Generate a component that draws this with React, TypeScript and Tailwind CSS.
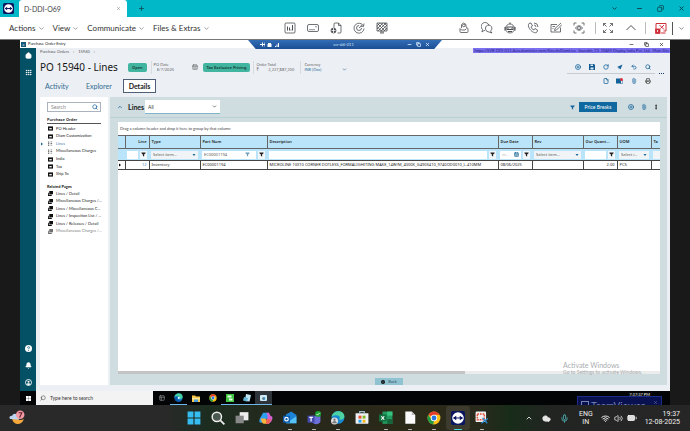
import type { ReactNode } from "react";
import {
  Battery, Bell, CalendarDays, ChevronDown, ChevronUp, CirclePlus,
  Cloud, Copy, EllipsisVertical, File, Grip, House, Mic, Minus, PanelsTopLeft,
  Paperclip, Plus, Printer, RotateCw, Search, Undo2, Volume2, Wifi, X,
} from "lucide-react";

const ui = "font-['Lato','Noto_Sans',sans-serif]";

function Funnel({ className = "" }: { className?: string }) {
  return (
    <svg viewBox="0 0 12 12" className={`h-[5px] w-[5px] shrink-0 ${className}`} fill="currentColor" aria-hidden="true">
      <path d="M1 1h10v2L7.500 6v5L4.500 9.500V6L1 3z" />
    </svg>
  );
}

function Caret({ className = "" }: { className?: string }) {
  return (
    <svg viewBox="0 0 6 4" className={`h-[2px] w-[4px] shrink-0 ${className}`} fill="currentColor" aria-hidden="true">
      <path d="M0 0h6L3 4z" />
    </svg>
  );
}

function TeamViewerMark({ className = "" }: { className?: string }) {
  return (
    <svg viewBox="0 0 24 24" className={className} aria-hidden="true">
      <rect width="24" height="24" rx="4" fill="#0b1560" />
      <circle cx="12" cy="12" r="9.500" fill="#fff" />
      <path d="M3.500 12 9 8v2.700h6V8l5.500 4-5.500 4v-2.700H9V16z" fill="#0b1560" />
    </svg>
  );
}

/* ---------- session window: title bar and toolbar ---------- */

function SessionTitleBar() {
  return (
    <header className="flex h-[17px] items-center bg-[#00b8c8] text-[#0d3f49]">
      <TeamViewerMark className="ml-[3px] h-[11px] w-[11px]" />
      <div className="ml-[5px] flex h-[17px] w-[108px] items-center justify-between rounded-t-[3px] bg-white pr-[6px] pl-[5px]">
        <span className="text-[7px] leading-[10px] text-[#444]">D-DDI-O69</span>
        <button aria-label="Close tab"><X size={5} strokeWidth={2} className="text-gray-500" /></button>
      </div>
      <button aria-label="New session" className="ml-[11px]"><Plus size={7} strokeWidth={2.5} /></button>
      <div className="ml-auto flex items-center gap-[14px] pr-[5px]">
        <button aria-label="More" className="mr-1"><ChevronDown size={7} strokeWidth={3} /></button>
        <button aria-label="Minimize"><Minus size={7} strokeWidth={3} /></button>
        <button aria-label="Restore"><Copy size={7} strokeWidth={2.5} className="rotate-90" /></button>
        <button aria-label="Close"><X size={7} strokeWidth={3} /></button>
      </div>
    </header>
  );
}

function Tool({ label, children, red = false }: { label: string; children: ReactNode; red?: boolean }) {
  return (
    <button aria-label={label} className="flex w-[23px] shrink-0 justify-center">
      <svg viewBox="0 0 24 24" className={`h-3 w-3 ${red ? "text-[#cf2f38]" : "text-[#4c4f54]"}`} fill="none" stroke="currentColor" strokeWidth="1.600">
        {children}
      </svg>
    </button>
  );
}

function SessionToolbar() {
  const menus = ["Actions", "View", "Communicate", "Files & Extras"];
  return (
    <div className="flex h-[23px] items-center border-b border-[#777] bg-white">
      <nav className="flex w-[278px] shrink-0 items-center gap-2 pl-[9px]">
        {menus.map((m) => (
          <button key={m} className="flex items-center gap-[2px] text-[8px] leading-[10px] whitespace-nowrap text-[#333]">
            {m}
            <ChevronDown size={7} strokeWidth={1.5} />
          </button>
        ))}
      </nav>
      <div className="flex">
        <Tool label="Dashboard">
          <rect x="2" y="2" width="20" height="20" rx="2" />
          <path d="M7 17V9M11 17v-6M17 17V6M14 17v-2" strokeWidth="2" />
        </Tool>
        <Tool label="Send key">
          <rect x="1" y="5" width="22" height="14" rx="3" />
          <path d="M5 15h2M9 15h2M13 15h2M17 9h2" strokeWidth="2.500" />
        </Tool>
        <Tool label="Remote file">
          <path d="M8 11V4a2 2 0 0 1 2-2h7l5 5v13a2 2 0 0 1-2 2h-5M17 2v5h5" />
          <circle cx="7" cy="17" r="5" fill="#4c4f54" />
          <path d="M3 17h8M7 12v10" stroke="#fff" />
        </Tool>
        <Tool label="Reboot">
          <path d="M21 8A10 10 0 1 0 22 13M22 3l-1 6-6-1M17 12a5 5 0 1 1-5-5M12 12l6-5" />
        </Tool>
        <Tool label="Black screen">
          <path d="M2 2h20v16H2zM8 22h8M10 18v4M14 18v4M2 8l6-6M2 14 14 2M4 18 20 2M10 18 22 6M16 18l6-6M16 2l6 6M9 2l13 13M3 3l15 15M2 9l9 9" />
        </Tool>
      </div>
      <div className="ml-auto flex items-center">
        <Tool label="Invite">
          <path d="M7 12V5l4-3 5 3v5l4 3v6a2 2 0 0 1-2 2H6a2 2 0 0 1-2-2v-6l3 3h7l3-3" />
          <circle cx="11.500" cy="7" r="2.500" />
        </Tool>
        <Tool label="Chat">
          <path d="M8 17H6l-4 3 1-5a8 8 0 1 1 13-8M9 14a6.500 6.500 0 1 1 10 4l3 4-6-2a7 7 0 0 1-7-6z" />
        </Tool>
        <Tool label="Assistant">
          <circle cx="12" cy="13" r="9" />
          <path d="M2 10v7M22 10v7M12 1v3M6 10h12v5H6zM8 19h8" strokeWidth="2.200" />
          <path d="M9 12v1M15 12v1" strokeWidth="2.500" />
        </Tool>
        <Tool label="Call">
          <path d="M4 3 8 2l3 6-3 2c1 3 3 5 6 6l2-3 5 3-1 4c-2 3-8 1-12-3S1 7 4 3zM14 2a8 8 0 0 1 8 8M14 6a4 4 0 0 1 4 4" />
        </Tool>
        <Tool label="Whiteboard">
          <path d="M14 5H2v15h19v-9M22 2 10 13l-1 4 4-1L24 5M5 9h5M5 13h2" />
        </Tool>
        <Tool label="Screenshot">
          <path d="M2 7V2h5M17 2h5v5M22 17v5h-5M7 22H2v-5M5 12c4-6 10-6 14 0-4 6-10 6-14 0z" />
          <circle cx="12" cy="12" r="3" />
        </Tool>
        <span className="ml-[5px] h-3 w-px bg-[#bbb]" />
        <Tool label="Full screen">
          <path d="M3 8V3h5M16 3h5v5M21 16v5h-5M8 21H3v-5M3 3l6 6M21 3l-6 6M21 21l-6-6M3 21l6-6" />
        </Tool>
        <Tool label="Collapse toolbar"><path d="m3 16 9-9 9 9" strokeWidth="2" /></Tool>
        <span className="ml-[3px] h-3 w-px bg-[#bbb]" />
        <span className="w-[3px]" />
        <Tool label="End session" red>
          <path d="M10 18H2V3h20v15h-5M9 6l9 9M18 6l-7 7M12 22h9" strokeWidth="2" />
          <path d="M1 14h9v9H1z" fill="currentColor" />
          <path d="M5 16v4" stroke="#fff" />
        </Tool>
        <span className="h-[13px] w-px bg-[#555]" />
        <button aria-label="End session options" className="px-[5px]"><ChevronDown size={7} strokeWidth={1.5} /></button>
      </div>
    </div>
  );
}

/* ---------- remote desktop ---------- */

function ConnectionBar() {
  return (
    <div className="absolute top-0 left-[228px] flex h-[9px] w-[194px] items-center justify-between bg-linear-to-b from-[#326db5] to-[#1b4e95] px-3 text-[4px] leading-[6px] text-[#d4e4f8] [clip-path:polygon(0_0,100%_0,96%_100%,4%_100%)]">
      <svg viewBox="0 0 40 10" className="h-[5px] w-5" fill="#fff" aria-hidden="true">
        <path d="M0 4h4V1h2v3h3V1h1v8H9V6H6v3H4V6H0zM16 4V2h6v2h1v6h-8V4zM30 8h2v2h-2zM33 5h2v5h-2zM36 2h2v8h-2z" />
      </svg>
      <span>svr-ddi-011</span>
      <span className="flex gap-1">
        <Minus size={5} strokeWidth={4} />
        <Copy size={5} strokeWidth={4} />
        <X size={5} strokeWidth={4} />
      </span>
    </div>
  );
}

function AppTitleBar() {
  return (
    <div className="flex h-2 items-center bg-white text-[4px] leading-[6px] text-[#222]">
      <span className="ml-px flex h-[5px] w-[5px] items-center justify-center bg-[#12597a] text-[4px] leading-[5px] text-white">e</span>
      <span className="ml-[2px]">Purchase Order Entry</span>
      <div className="mr-[6px] ml-auto flex gap-[10px]">
        <button aria-label="Minimize window"><Minus size={5} strokeWidth={3} /></button>
        <button aria-label="Restore window"><Copy size={5} strokeWidth={3} /></button>
        <button aria-label="Close window"><X size={5} strokeWidth={3} /></button>
      </div>
    </div>
  );
}

function Rail() {
  return (
    <nav className="flex w-4 shrink-0 flex-col items-center bg-[#045064] pt-1 pb-[5px] text-white">
      <button aria-label="Home"><House size={7} fill="white" strokeWidth={2} /></button>
      <button aria-label="Applications" className="mt-[10px]"><Grip size={7} strokeWidth={3} /></button>
      <div className="mt-auto flex flex-col items-center gap-[10px]">
        <button aria-label="Help">
          <svg viewBox="0 0 14 14" className="h-[7px] w-[7px]"><circle cx="7" cy="7" r="7" fill="#fff" /><path d="M5 5.500c0-3 4.500-2.500 4 0C8.800 6.800 7 6.800 7 8.500M7 10v1.600" stroke="#045064" strokeWidth="1.600" fill="none" /></svg>
        </button>
        <button aria-label="Notifications"><Bell size={7} fill="white" /></button>
        <button aria-label="Account">
          <svg viewBox="0 0 14 14" className="h-[7px] w-[7px]"><circle cx="7" cy="7" r="6" fill="none" stroke="#fff" strokeWidth="1.800" /><circle cx="7" cy="5.500" r="2" fill="#fff" /><path d="M3 10.500c1-3 7-3 8 0l-4 2z" fill="#fff" /></svg>
        </button>
      </div>
    </nav>
  );
}

function Pill({ children }: { children: ReactNode }) {
  return (
    <button className="h-[9px] rounded-[2px] bg-[#42b5a0] px-1 font-['Noto_Sans',sans-serif] text-[4px] leading-[9px] font-semibold whitespace-nowrap text-[#11332f]">
      {children}
    </button>
  );
}

function IconButton({ label, children }: { label: string; children: ReactNode }) {
  return <button aria-label={label} className="flex h-[7px] w-[7px] items-center justify-center">{children}</button>;
}

function PageHeader() {
  const divider = "h-[13px] w-px bg-[#d8dce1]";
  return (
    <div className="flex h-[49px] items-start justify-between">
      <div>
        <div className="flex h-[7px] items-center gap-1 pl-[3px] text-[4px] leading-[6px] text-[#555]">
          <a href="#orders">Purchase Orders</a><span>›</span>
          <a href="#15940">15940</a><span>›</span>
        </div>
        <div className="flex h-6 items-center pl-[3px]">
          <h1 className="w-[88px] font-['Noto_Sans',sans-serif] text-[10px] leading-[14px] whitespace-nowrap text-[#151515]">PO 15940 - Lines</h1>
          <Pill>Open</Pill>
          <span className={`ml-1 ${divider}`} />
          <div className="ml-px flex w-[50px] items-center justify-between pr-[5px] pl-px">
            <label className="flex flex-col text-[4px] leading-[5px] text-[#666]">
              PO Date
              <input defaultValue="8/7/2025" className="block w-9 bg-transparent pl-[3px] outline-none" />
            </label>
            <CalendarDays size={6} className="text-[#555]" />
          </div>
          <Pill>Tax Exclusive Pricing</Pill>
          <span className={`ml-[3px] ${divider}`} />
          <div className="w-[46px] pl-[2px] text-[4px] leading-[5px] text-[#666]">
            Order Total
            <div className="flex w-[38px] justify-between font-['Noto_Sans',sans-serif]"><span>₹</span><span>2,227,887,200</span></div>
          </div>
          <span className={divider} />
          <label className="flex w-[46px] flex-col pl-[3px] text-[4px] leading-[5px] text-[#666]">
            Currency
            <span className="flex items-center justify-between">
              <select className="w-8 appearance-none bg-transparent text-[#2c6d9c]"><option>INR (Doc)</option></select>
              <ChevronDown size={5} strokeWidth={3} className="text-[#2c6d9c]" />
            </span>
          </label>
        </div>
        <nav className="flex h-[14px] items-center text-[7px] leading-[9px] text-[#306b91]">
          <a href="#activity" className="w-10 pl-[8px]">Activity</a>
          <a href="#explorer" className="w-[46px] pl-[9px]">Explorer</a>
          <a href="#details" className="flex h-[14px] w-[33px] items-center justify-center border border-[#4f6076] bg-white font-bold text-[#1a1a1a]">Details</a>
        </nav>
      </div>
      <div className="flex flex-col items-end">
        <p className="h-[5px] bg-[#7a70f0] px-px text-[4px] leading-[5px] whitespace-nowrap text-[#241c7c]">
          https://SVR-DDI-011.Asia.diaminter.com/KineticDiamLive &nbsp;Saurabh_CS &nbsp;DIAM Display India Pvt. Ltd. &nbsp;Main Site
        </p>
        <div className="mt-[10px] mr-[6px] flex items-center gap-1 text-[#14639a]">
          <div>
            <div className="flex justify-end gap-[7px] border-b border-[#c6ccd2] pr-1 pb-[3px] pl-[7px]">
              <IconButton label="New"><CirclePlus size={6} strokeWidth={3} /></IconButton>
              <IconButton label="Save">
                <svg viewBox="0 0 12 12" className="h-[6px] w-[6px]"><path d="M0 0h10l2 2v10H0z" fill="#0f5a90" /><path d="M3 1h5v3H3zM3 7h6v4H3z" fill="#dfe9f1" /></svg>
              </IconButton>
              <IconButton label="Refresh"><RotateCw size={6} strokeWidth={3} /></IconButton>
              <IconButton label="Submit">
                <svg viewBox="0 0 12 12" className="h-[6px] w-[6px]"><path d="M11 1 7 11l-2-3-1 3-1-4-3-1z" fill="#14639a" /></svg>
              </IconButton>
              <IconButton label="Undo"><Undo2 size={6} strokeWidth={3} /></IconButton>
              <IconButton label="Search"><Search size={6} strokeWidth={3} /></IconButton>
            </div>
            <div className="flex justify-end gap-[7px] pt-[3px] pr-1">
              <IconButton label="Notes"><File size={6} strokeWidth={3} /></IconButton>
              <IconButton label="Messages">
                <svg viewBox="0 0 14 12" className="h-[6px] w-[7px]"><path d="M0 1h10v10H0z" fill="#14639a" /><path d="M9 4h4v7H9z" fill="none" stroke="#14639a" /><circle cx="11" cy="3" r="3" fill="#e2343f" /></svg>
              </IconButton>
              <IconButton label="Attachments"><Paperclip size={6} strokeWidth={2} className="-rotate-45" /></IconButton>
              <IconButton label="Print"><Printer size={6} strokeWidth={3} className="text-[#555]" /></IconButton>
            </div>
          </div>
          <button aria-label="More actions" className="flex w-[5px] justify-between text-[#0c3d6b]">
            <span className="h-px w-px bg-current" /><span className="h-px w-px bg-current" /><span className="h-px w-px bg-current" />
          </button>
        </div>
      </div>
    </div>
  );
}

function PageIcon({ kind }: { kind: "card" | "list" | "stack" }) {
  return (
    <svg viewBox="0 0 12 12" className="h-[5px] w-[5px] shrink-0" aria-hidden="true">
      {kind === "card" && <><path d="M0 1h12v10H0z" fill="#111" /><path d="M3 5h6v3H3z" fill="#fff" /></>}
      {kind === "list" && <path d="M0 1h3v3H0zM0 5h3v3H0zM0 9h3v3H0zM6 1h4v2H6zM6 5h4v2H6zM6 9h4v2H6z" fill="#777" />}
      {kind === "stack" && <path d="M3 0h9v8H3zM0 4h2v5h7v3H0z" fill="#111" />}
    </svg>
  );
}

const pages: { name: string; kind: "card" | "list" }[] = [
  { name: "PO Header", kind: "card" },
  { name: "Diam Customization", kind: "card" },
  { name: "Lines", kind: "list" },
  { name: "Miscellaneous Charges", kind: "list" },
  { name: "India", kind: "card" },
  { name: "Tax", kind: "card" },
  { name: "Ship To", kind: "card" },
];

const related = [
  "Lines / Detail", "Miscellaneous Charges /...", "Lines / Miscellaneous C...",
  "Lines / Inspection List / ...", "Lines / Releases / Detail", "Miscellaneous Charges /...",
];

function SidePanel() {
  return (
    <aside className="w-[68px] shrink-0 bg-white px-[7px] pt-[5px] text-[4px] leading-[6px] text-[#222]">
      <div className="flex h-[10px] items-center border border-[#aab3bd] pr-[2px] pl-[3px]">
        <input type="search" aria-label="Search pages" placeholder="Search" className="w-full min-w-0 bg-transparent text-[5px] leading-[7px] outline-none placeholder:text-[#888]" />
        <Search size={6} strokeWidth={3} className="shrink-0 text-[#2a6fa5]" />
      </div>
      <h2 className="mt-[5px] border-b border-[#555] font-['Noto_Sans',sans-serif] font-semibold text-[#111]">Purchase Order</h2>
      <ul className="mt-px grid h-[53px] auto-rows-fr items-center">
        {pages.map((p) => (
          <li key={p.name}>
            <a href="#page" className={`relative flex items-center gap-[3px] pl-px whitespace-nowrap ${p.name === "Lines" ? "text-[#3b7dab]" : ""}`}>
              {p.name === "Lines" && <Caret className="absolute left-[-7px] -rotate-90 text-[#1463a0]" />}
              <PageIcon kind={p.kind} />
              {p.name}
            </a>
          </li>
        ))}
      </ul>
      <h2 className="mt-[6px] font-bold text-[#111]">Related Pages</h2>
      <ul className="grid h-[45px] auto-rows-fr items-center">
        {related.map((r, i) => (
          <li key={i}>
            <a href="#related" className={`flex items-center gap-[3px] pl-px whitespace-nowrap ${i === 5 ? "opacity-60" : ""}`}>
              <PageIcon kind="stack" />
              {r}
            </a>
          </li>
        ))}
      </ul>
    </aside>
  );
}

function FilterButton({ label }: { label: string }) {
  return <button aria-label={`Filter ${label}`} className="flex h-2 w-[7px] shrink-0 items-center justify-center bg-[#f4f7f9] text-[#222]"><Funnel /></button>;
}

function TextFilter({ label, value = "", clear = false }: { label: string; value?: string; clear?: boolean }) {
  return (
    <div className="flex items-center gap-[2px]">
      <div className="flex h-2 min-w-0 flex-1 items-center bg-white px-[2px] text-[#555]">
        <input aria-label={`${label} filter`} defaultValue={value} className="w-full min-w-0 bg-transparent outline-none" />
        {clear && <Funnel className="mr-1 text-[#6f9fbb]" />}
      </div>
      <FilterButton label={label} />
    </div>
  );
}

function SelectFilter({ label, text }: { label: string; text: string }) {
  return (
    <div className="flex h-2 items-center bg-[#f1f4f6] px-[2px] text-[#555]">
      <select aria-label={`${label} filter`} className="w-full min-w-0 appearance-none bg-transparent"><option>{text}</option></select>
      <Caret className="text-[#1c6797]" />
    </div>
  );
}

function LinesGrid() {
  const th = "border-r border-[#666] px-[2px] text-left font-semibold overflow-hidden text-ellipsis whitespace-nowrap";
  const td = "border-r border-[#444] px-[2px] whitespace-nowrap overflow-hidden";
  const f = "px-[2px]";
  return (
    <div className="flex flex-1 flex-col overflow-hidden bg-white text-[4px] leading-[6px] text-[#222]">
      <p className="h-[13px] px-[2px] pt-1 text-[#444]">Drag a column header and drop it here to group by that column</p>
      <table className="w-full table-fixed border-collapse font-['Noto_Sans',sans-serif]">
        <colgroup>
          <col className="w-[7px]" /><col className="w-6" /><col className="w-[51px]" /><col className="w-[67px]" /><col />
          <col className="w-[34px]" /><col className="w-[51px]" /><col className="w-[34px]" /><col className="w-[34px]" /><col className="w-[9px]" />
        </colgroup>
        <thead>
          <tr className="h-[13px] border-t border-b border-[#666] bg-[#bae4fa]">
            <th className={th} /><th className={`${th} text-right!`}>Line</th><th className={th}>Type</th><th className={th}>Part Num</th>
            <th className={th}>Description</th><th className={th}>Due Date</th><th className={th}>Rev</th>
            <th className={th}>Our Quant...</th><th className={th}>UOM</th><th className="overflow-hidden px-[2px] text-left font-semibold">Ta</th>
          </tr>
          <tr className="h-3 border-b border-[#444] bg-[#bae4fa]">
            <td />
            <td className={f}><TextFilter label="Line" /></td>
            <td className={f}><SelectFilter label="Type" text="Select item..." /></td>
            <td className={f}><TextFilter label="Part Num" value="EC00001194" clear /></td>
            <td className={f}><TextFilter label="Description" /></td>
            <td className={f}>
              <div className="flex items-center gap-[2px]">
                <div className="flex h-2 min-w-0 flex-1 items-center bg-white px-[2px] text-[#666]">
                  <input aria-label="Due date filter" placeholder="m..." className="w-full min-w-0 bg-transparent outline-none" />
                  <CalendarDays size={5} strokeWidth={3} className="shrink-0 text-[#1c6797]" />
                </div>
                <FilterButton label="Due Date" />
              </div>
            </td>
            <td className={f}><SelectFilter label="Rev" text="Select item..." /></td>
            <td className={f}><TextFilter label="Our Quantity" /></td>
            <td className={f}><SelectFilter label="UOM" text="Select i..." /></td>
            <td className="pl-[2px]"><div className="h-2 bg-[#f1f4f6]" /></td>
          </tr>
        </thead>
        <tbody>
          <tr className="h-[9px] border-b border-[#444]">
            <td className="border-r border-[#444]"><Caret className="-rotate-90 text-black" /></td>
            <td className={`${td} text-right text-[#3b7dab]`}>12</td>
            <td className={td}>Inventory</td>
            <td className={td}>EC00001194</td>
            <td className={td}>MICROLINE 10X10 CORNER DOTLESS_FORMALIGHITING MAKE_14W/M_4000K_G4903410_9740OD0010_L-410MM</td>
            <td className={td}>08/06/2025</td>
            <td className={td} />
            <td className={`${td} text-right`}>2.00</td>
            <td className={td}>PCS</td>
            <td />
          </tr>
        </tbody>
      </table>
      <div className="mt-auto h-[3px] bg-[#ececec]"><div className="h-full w-[64%] bg-[#c4c4c4]" /></div>
    </div>
  );
}

function LinesPanel() {
  return (
    <main className="flex min-w-0 flex-1 flex-col bg-[#cfdde0] pr-[7px] pl-2">
      <div className="-mr-[7px] -ml-2 flex h-[21px] items-center border-b border-[#b8cfd6] pr-[8px] pl-[7px]">
        <button aria-label="Collapse lines"><ChevronUp size={6} strokeWidth={3} className="text-[#17609a]" /></button>
        <h2 className="ml-[5px] w-[17px] text-[7px] leading-[9px] font-bold text-[#1a1a1a]">Lines</h2>
        <div className="flex h-[14px] w-[75px] items-center border-b border-[#7fb6cc] bg-white px-[3px] text-[5px] leading-[8px] text-[#333]">
          <select aria-label="Lines view" className="w-full min-w-0 appearance-none bg-transparent"><option>All</option></select>
          <ChevronDown size={5} strokeWidth={3} className="shrink-0" />
        </div>
        <div className="ml-auto flex items-center text-[#14639a]">
          <button aria-label="Filter lines"><Funnel /></button>
          <button className="ml-1 h-[10px] w-[38px] bg-[#0f69a0] text-[5px] leading-[10px] whitespace-nowrap text-white">Price Breaks</button>
          <button aria-label="Add line" className="ml-[11px]"><CirclePlus size={6} strokeWidth={3} /></button>
          <button aria-label="Attach" className="ml-[7px]"><Paperclip size={6} strokeWidth={2} className="-rotate-45" /></button>
          <button aria-label="More line actions" className="ml-[6px]"><EllipsisVertical size={6} strokeWidth={4} className="text-[#333]" /></button>
        </div>
      </div>
      <div className="h-1" />
      <LinesGrid />
      <div className="flex h-[11px] items-end justify-center">
        <button className="flex h-[7px] w-7 items-center justify-center gap-[3px] bg-[#8fc3d1] text-[4px] leading-[7px] text-[#35505a]">
          <svg viewBox="0 0 10 10" className="h-[4px] w-[4px]" aria-hidden="true"><circle cx="5" cy="5" r="5" fill="#111" /><circle cx="5" cy="5" r="1.500" fill="#8fc3d1" /></svg>
          Back
        </button>
      </div>
    </main>
  );
}

function EdgeLogo({ className = "h-[9px] w-[9px]" }: { className?: string }) {
  return (
    <svg viewBox="0 0 24 24" className={className} aria-hidden="true">
      <circle cx="12" cy="12" r="11" fill="#1686d2" />
      <path d="M1 11C3-2 22-3 23 10c0 4-3 6-7 6-2 0-2-1-1-3 1-4-6-7-14-2z" fill="#45cfa0" />
      <path d="M9 11c-3 5 3 10 11 9-6 7-18 3-18-6 0-5 5-6 7-3z" fill="#0b56ab" />
      <path d="M12 10c3 0 4 2 3 4-1 3-4 2-5-1z" fill="#fff" />
    </svg>
  );
}

function ChromeLogo({ className = "h-2 w-2" }: { className?: string }) {
  return (
    <svg viewBox="0 0 24 24" className={className} aria-hidden="true">
      <circle cx="12" cy="12" r="11" fill="#fbc116" />
      <path d="M12 12 2.500 6.500A11 11 0 0 1 21.500 6.500H12z" fill="#e33b2e" />
      <path d="M2.500 6.500 7.500 15 12 17l-1.500 6A11 11 0 0 1 2.500 6.500z" fill="#229b48" />
      <circle cx="12" cy="12" r="5.500" fill="#fff" />
      <circle cx="12" cy="12" r="4.200" fill="#2b74e4" />
    </svg>
  );
}

function WindowsLogo({ className }: { className: string }) {
  return <svg viewBox="0 0 20 20" className={className} fill="currentColor" aria-hidden="true"><path d="M0 0h9.500v9.500H0zM10.500 0H20v9.500h-9.500zM0 10.500h9.500V20H0zM10.500 10.500H20V20h-9.500z" /></svg>;
}

function RemoteTaskbar() {
  const item = "flex h-full w-[17px] items-center justify-center";
  return (
    <footer className="flex h-[14px] items-center overflow-hidden bg-[#030405] text-white">
      <button aria-label="Remote start" className="flex w-4 justify-center"><WindowsLogo className="h-[5px] w-[5px]" /></button>
      <label className="flex h-[14px] w-[117px] items-center gap-1 bg-[#f3f3f3] pl-1 text-[#333]">
        <Search size={6} strokeWidth={2} className="-scale-x-100" />
        <input aria-label="Remote search" placeholder="Type here to search" className="w-24 bg-transparent text-[5px] leading-[7px] outline-none placeholder:text-[#333]" />
      </label>
      <button aria-label="Task view" className={item}><PanelsTopLeft size={6} className="text-[#bbb]" /></button>
      <button aria-label="Edge" className={`${item} border-b border-[#6fb7e8]`}><EdgeLogo /></button>
      <button aria-label="Files" className={item}>
        <svg viewBox="0 0 16 14" className="h-[7px] w-2"><path d="M0 1h6l2 2h8v11H0z" fill="#f8c94a" /><path d="M0 6h16v3H0z" fill="#fbe49a" /><path d="M4 9h8v5H4z" fill="#4aa0dc" /></svg>
      </button>
      <button aria-label="Chrome" className={item}><ChromeLogo /></button>
      <button aria-label="Sheets" className={`${item} border-b border-[#6fb7e8]`}>
        <svg viewBox="0 0 16 16" className="h-2 w-2"><path d="M0 0h16v16H0z" fill="#3fc43f" /><path d="M3 3h8v4H3zM6 9h7v4H6z" fill="#e7ffe7" /></svg>
      </button>
      <button aria-label="Notepad" className={`${item} border-b border-[#6fb7e8]`}>
        <svg viewBox="0 0 16 16" className="h-2 w-2"><path d="m6 0 10 2-3 13-9-1z" fill="#bfe4f2" /><path d="m2 6 8 2-2 7-8-2z" fill="#63b8d8" /></svg>
      </button>
      <button aria-label="Epicor" className={`${item} border-b border-[#6fb7e8] bg-[#2d3338]`}>
        <span className="flex h-[6px] w-[7px] items-center justify-center rounded-[1px] bg-[#cfeaf6] text-[6px] leading-[6px] font-bold text-[#0b587c]">e</span>
      </button>
      <span className="mr-5 mb-[7px] ml-auto text-[4px] leading-[5px]">7:37:37 PM</span>
    </footer>
  );
}

function RemoteDesktop() {
  return (
    <div className="flex flex-1 overflow-hidden bg-[#191919] px-5">
      <div className="relative flex min-w-0 flex-1 flex-col overflow-hidden">
        <AppTitleBar />
        <ConnectionBar />
        <div className="flex flex-1">
          <Rail />
          <div className="flex min-w-0 flex-1 flex-col bg-[#eceff4] pl-px">
            <PageHeader />
            <div className="flex flex-1 gap-[2px] pr-[3px] pl-[3px]">
              <SidePanel />
              <LinesPanel />
            </div>
            <div className="h-[6px]" />
          </div>
        </div>
        <RemoteTaskbar />
        <div className="absolute right-7 bottom-[29px] text-[#a9adaf]">
          <p className="text-[7px] leading-[8px]">Activate Windows</p>
          <p className="text-[5px] leading-[7px]">Go to Settings to activate Windows.</p>
        </div>
        <div className="absolute right-2 bottom-[-5px] flex h-[14px] w-[85px] items-start gap-[2px] border border-[#1c2c86] bg-[#0a1150] px-[3px] pt-[2px] text-[#7785b0]">
          <span className="mt-[2px] h-2 w-2 border border-[#7785b0]" />
          <span className="text-[10px] leading-[12px]">TeamViewer</span>
          <X size={5} className="mt-px ml-auto" />
        </div>
      </div>
    </div>
  );
}

/* ---------- local taskbar ---------- */

function Task({ label, running = false, active = false, children }: { label: string; running?: boolean; active?: boolean; children: ReactNode }) {
  return (
    <button aria-label={label} className={`relative flex h-6 w-6 shrink-0 items-center justify-center rounded-[3px] ${active ? "bg-[#3d3b2d]" : ""}`}>
      <svg viewBox="0 0 24 24" className="h-[14px] w-[14px]">{children}</svg>
      {running && <span className={`absolute bottom-0 h-px rounded-full ${active ? "w-2 bg-[#48d8e6]" : "w-1 bg-[#bbb]"}`} />}
    </button>
  );
}

function LocalTaskbar() {
  return (
    <footer className="flex h-[26px] items-center bg-[linear-gradient(90deg,#292929_0%,#292929_24%,#1c2d20_30%,#26281c_42%,#2c2a18_60%,#2a2a1c_69%,#182c1a_74%,#222422_80%,#262626_100%)] text-white">
      <div className="flex w-[182px] shrink-0 items-center pl-[9px]">
        <button aria-label="Weather">
          <svg viewBox="0 0 30 30" className="h-4 w-4">
            <path d="M6 17c2 12 18 13 22 0-8 4-11 1-12-5" fill="#f7a83c" />
            <path d="M2 17c-3-4 1-7 4-6 1-5 9-5 10 0 5 0 5 6 1 7z" fill="#bcd4f2" />
            <circle cx="21" cy="9" r="8" fill="#f39aa5" />
            <path d="M18 5h6l-4 9" stroke="#65202c" strokeWidth="2" fill="none" />
          </svg>
        </button>
      </div>
      <Task label="Start"><path d="M1 1h10v10H1zM13 1h10v10H13zM1 13h10v10H1zM13 13h10v10H13z" fill="#35bdf2" /></Task>
      <Task label="Search"><circle cx="10" cy="10" r="8" fill="#4b5a50" stroke="#eee" strokeWidth="2.500" /><path d="m16 16 7 7" stroke="#eee" strokeWidth="3" /></Task>
      <Task label="Task view"><path d="M8 2h15v14H8z" fill="#eee" /><path d="M1 8h14v13H1z" fill="#888" /></Task>
      <Task label="Copilot">
        <path d="M7 3h9l3 7-7 4-7 6H3c-3 0-3-4-1-8z" fill="#2c9ff0" /><path d="M13 3h4l3 6h2c2 2 1 6-1 9l-4 4h-5l3-13z" fill="#d75fd0" />
        <path d="M3 13h8l3 9H8c-2 0-4-4-5-9z" fill="#f6b63e" /><path d="M12 14h9l-4 8h-5z" fill="#ef6552" />
      </Task>
      <Task label="Outlook" running><path d="M5 6 14 1l9 6v14H5z" fill="#1d83d8" /><path d="m5 21 18-12v12z" fill="#55c2f5" /><path d="M0 8h12v12H0z" fill="#0c5cae" /><circle cx="6" cy="14" r="3" stroke="#fff" strokeWidth="2" fill="none" /></Task>
      <Task label="Teams" running><path d="M8 8h15v10c-2 6-12 6-15 0z" fill="#6a70d8" /><path d="M1 8h12v12H1z" fill="#444bae" /><path d="M4 11h6M7 11v7" stroke="#fff" strokeWidth="2" /><circle cx="19" cy="5" r="5" fill="#18a52e" /><path d="m16 5 2 2 4-4" stroke="#fff" strokeWidth="1.500" fill="none" /></Task>
      <Task label="Edge" running>
        <circle cx="12" cy="11" r="11" fill="#1789d1" /><path d="M1 10C3-2 22-3 23 9c0 4-3 6-7 6-2 0-2-1-1-3 1-4-6-7-14-2z" fill="#4dd3a3" />
        <circle cx="6" cy="17" r="6" fill="#ddd" /><circle cx="6" cy="15" r="2" fill="#777" /><path d="M2 21c1-5 7-5 8 0z" fill="#777" />
      </Task>
      <Task label="Store"><path d="M1 4h22v16a2 2 0 0 1-2 2H3a2 2 0 0 1-2-2z" fill="#eef1f4" /><path d="M8 4V1h8v3" stroke="#9bb9cf" strokeWidth="2" fill="none" /><path d="M6 8h5v5H6z" fill="#e9502b" /><path d="M13 8h5v5h-5z" fill="#7db826" /><path d="M6 15h5v5H6z" fill="#2aa2e8" /><path d="M13 15h5v5h-5z" fill="#f7b51d" /></Task>
      <Task label="Excel" running><path d="M6 1h17v21H6z" fill="#249a60" /><path d="M14 1h9v7h-9z" fill="#36c481" /><path d="M14 14h9v8h-9z" fill="#16633c" /><path d="M0 6h13v12H0z" fill="#107040" /><path d="m4 9 5 6M9 9l-5 6" stroke="#fff" strokeWidth="2" /></Task>
      <Task label="Document" running><path d="M4 1h11l6 6v15H4z" fill="#fafafa" /><path d="M15 1v6h6z" fill="#bbb" /></Task>
      <Task label="Chrome" running>
        <circle cx="12" cy="12" r="11" fill="#fbc116" /><path d="M12 12 2.500 6.500A11 11 0 0 1 21.500 6.500H12z" fill="#e33b2e" /><path d="M2.500 6.500 7.500 15 12 17l-1.500 6A11 11 0 0 1 2.500 6.500z" fill="#229b48" />
        <circle cx="12" cy="12" r="5.500" fill="#fff" /><circle cx="12" cy="12" r="4.200" fill="#2b74e4" />
      </Task>
      <Task label="TeamViewer" running active><rect width="24" height="24" rx="3" fill="#0b1560" /><circle cx="12" cy="12" r="10" fill="#fff" /><path d="M3 12 9 8v3h6V8l6 4-6 4v-3H9v3z" fill="#0b1560" /></Task>
      <Task label="Snipping tool" running><rect x="1" y="1" width="18" height="18" rx="2" fill="#f1f1f1" /><path d="M4 5h12v10H4z" fill="none" stroke="#e2513c" strokeWidth="2.500" strokeDasharray="3 1.500" /><path d="m11 21 11-8M13 12l8 9" stroke="#2a8ad0" strokeWidth="2" /></Task>
      <div className="ml-auto flex items-center pr-[10px] font-['Roboto',sans-serif] text-[#f2f2f2]">
        <button aria-label="Hidden icons"><ChevronUp size={8} strokeWidth={2.5} /></button>
        <Cloud size={9} fill="#e4e4e4" className="ml-[9px]" />
        <Mic size={9} className="ml-[9px] text-[#58c6cb]" />
        <span className="ml-[10px] text-center text-[7px] leading-[8px]">ENG<br />IN</span>
        <span className="ml-[8px] flex items-center gap-1"><Wifi size={9} strokeWidth={2.5} /><Volume2 size={9} /><Battery size={10} fill="#ddd" /></span>
        <span className="ml-[8px] text-right text-[7px] leading-[8px] whitespace-nowrap">19:37<br />12-08-2025</span>
      </div>
    </footer>
  );
}

export default function App() {
  return (
    <div className={`flex min-h-screen flex-col overflow-hidden bg-[#191919] ${ui}`}>
      <SessionTitleBar />
      <SessionToolbar />
      <RemoteDesktop />
      <LocalTaskbar />
    </div>
  );
}
